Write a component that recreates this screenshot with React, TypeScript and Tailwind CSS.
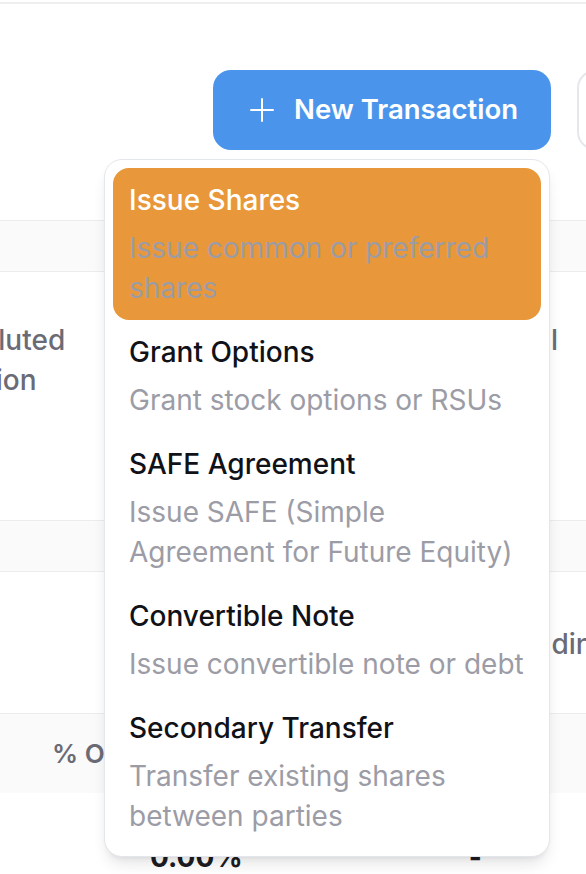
import React from 'react';

type Action = {
  title: string;
  description: string;
};

const actions: Action[] = [
  { title: 'Issue Shares', description: 'Issue common or preferred shares' },
  { title: 'Grant Options', description: 'Grant stock options or RSUs' },
  { title: 'SAFE Agreement', description: 'Issue SAFE (Simple Agreement for Future Equity)' },
  { title: 'Convertible Note', description: 'Issue convertible note or debt' },
  { title: 'Secondary Transfer', description: 'Transfer existing shares between parties' },
];

const PlusIcon: React.FC = () => (
  <svg width="24" height="24" viewBox="0 0 24 24" fill="none" stroke="currentColor" strokeWidth="2" strokeLinecap="round">
    <path d="M12 1v22" />
    <path d="M1 12h22" />
  </svg>
);

const TransactionMenu: React.FC<{ active: number }> = ({ active }) => {
  return (
    <div className="absolute left-[104px] top-[159px] w-[446px] rounded-[18px] border border-[#e3e6ec] bg-white p-[8px] shadow-lg">
      {actions.map((action, index) => (
        <div
          key={`action-${index}`}
          className={`rounded-[16px] pl-[16px] pr-[10px] pt-[12px] pb-[12px] ${index === active ? 'bg-[#e8983a]' : 'bg-white'}`}>
          <div className={`text-[28px] font-medium leading-[40px] ${index === active ? 'text-white' : 'text-[#111217]'}`}>
            {action.title}
          </div>
          <div className="mt-[8px] text-[28px] leading-[40px] text-[#9c9ca6]">{action.description}</div>
        </div>
      ))}
    </div>
  );
};

const App: React.FC = () => {
  return (
    <div className="relative h-[874px] w-[586px] overflow-hidden bg-white font-['Inter',sans-serif]">
      <div className="mt-[2px] h-[2px] bg-[#efefef]" />

      {/* Toolbar */}
      <div className="flex h-[216px] items-start gap-[26px] pl-[213px] pt-[66px]">
        <button className="flex h-[80px] w-[338px] shrink-0 items-center gap-[20px] rounded-[18px] bg-[#4a95eb] pl-[37px] text-white">
          <PlusIcon />
          <span className="whitespace-nowrap text-[27.5px] font-semibold">New Transaction</span>
        </button>
        <button className="h-[80px] w-[160px] shrink-0 rounded-[18px] border-2 border-[#e5e7eb] bg-white" />
      </div>

      {/* Table behind */}
      <div className="h-[52px] border-y border-[#ececec] bg-[#fafafa]" />
      <div className="flex h-[248px] justify-between pt-[48px] text-[28px] font-medium leading-[40px] text-[#6b6b76]">
        <div className="-ml-[122px] w-[210px] text-center">
          Fully Diluted
          <br />
          Position
        </div>
        <div className="mr-[28px] whitespace-nowrap">Total</div>
      </div>
      <div className="h-[52px] border-y border-[#ececec] bg-[#fafafa]" />
      <div className="flex h-[141px] justify-end pt-[52px] text-[28px] font-medium leading-[40px] text-[#6b6b76]">
        <div className="-mr-[24px] whitespace-nowrap">Outstanding</div>
      </div>
      <div className="flex h-[80px] items-center border-t border-[#ececec] bg-[#fafafa] pl-[52px] text-[26px] font-semibold text-[#6b6b76]">
        <span className="whitespace-nowrap">% Ownership</span>
      </div>
      <div className="flex items-start pt-[44px] text-[28px] font-bold leading-[40px] text-[#1c1c22]">
        <span className="ml-[150px]">0.00%</span>
        <span className="ml-[226px]">-</span>
      </div>

      <TransactionMenu active={0} />
    </div>
  );
};

export default App;
